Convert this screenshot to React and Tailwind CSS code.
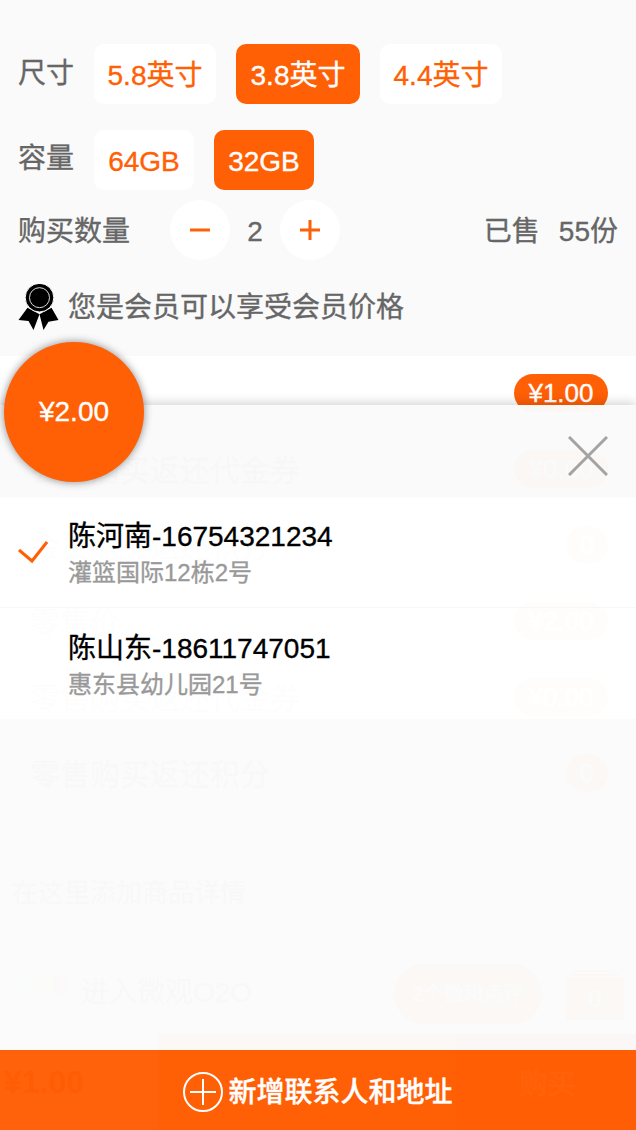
import React from 'react'

const FONT = 'font-["Liberation_Sans","Noto_Sans_CJK_SC",sans-serif] [-webkit-text-stroke:0.35px]'

const rows = [
  { label: '会员价', value: '¥1.00' },
  { label: '会员购买返还代金券', value: '¥0.00' },
  { label: '会员购买返还积分', value: '0', round: true },
  { label: '零售价', value: '¥2.00' },
  { label: '零售购买返还代金券', value: '¥0.00' },
  { label: '零售购买返还积分', value: '0', round: true },
]

const contacts = [
  { name: '陈河南-16754321234', address: '灌篮国际12栋2号', checked: true },
  { name: '陈山东-18611747051', address: '惠东县幼儿园21号' },
]

function Chip({ children, active, width }) {
  return (
    <div
      className={`flex h-[60px] items-center justify-center rounded-[10px] pt-[3px] text-[28px] ${width} ${
        active ? 'bg-[#ff5f05] text-white' : 'bg-white text-[#ff5f05]'
      }`}
    >
      {children}
    </div>
  )
}

function RoundButton({ children }) {
  return (
    <div className="flex h-[60px] w-[60px] items-center justify-center rounded-full bg-white">
      <svg width="22" height="22" viewBox="0 0 22 22" stroke="#ff5f05" strokeWidth="3">
        {children}
      </svg>
    </div>
  )
}

function Medal() {
  return (
    <svg className="h-[47px] w-[41px] shrink-0" viewBox="54 27 122 141">
      <path d="M82 98 L55 135 L85 138 L100 165 L118 118 Z" fill="#000" />
      <path d="M154 98 L175 135 L145 140 L130 165 L118 118 Z" fill="#000" />
      <circle cx="118" cy="68" r="43" fill="#000" stroke="#fff" strokeWidth="3" />
      <circle cx="118" cy="68" r="30" fill="#000" stroke="#ddd" strokeWidth="3" />
    </svg>
  )
}

// the page that sits behind the address sheet
function ProductPage() {
  return (
    <div className="flex h-[1130px] flex-col bg-[#fafafa]">
      <div className="flex flex-col pl-[18px] pr-[18px] pt-[44px] text-[#666]">
        <div className="flex items-center">
          <span className="w-[76px] pb-[1px] text-[28px]">尺寸</span>
          <div className="flex gap-5">
            <Chip width="w-[122px]">5.8英寸</Chip>
            <Chip width="w-[124px]" active>3.8英寸</Chip>
            <Chip width="w-[122px]">4.4英寸</Chip>
          </div>
        </div>
        <div className="mt-[26px] flex items-center">
          <span className="w-[76px] pb-[2px] text-[28px]">容量</span>
          <div className="flex gap-5">
            <Chip width="w-[100px]">64GB</Chip>
            <Chip width="w-[100px]" active>32GB</Chip>
          </div>
        </div>
        <div className="mt-[10px] flex items-center">
          <span className="w-[152px] pt-[3px] text-[28px]">购买数量</span>
          <RoundButton>
            <path d="M1 11 H21" />
          </RoundButton>
          <span className="w-[50px] pt-[3px] text-center text-[28px]">2</span>
          <RoundButton>
            <path d="M1 11 H21 M11 1 V21" />
          </RoundButton>
          <span className="ml-auto pt-[3px] text-[28px]">
            已售<span className="ml-[19px]">55份</span>
          </span>
        </div>
        <div className="mt-[24px] flex items-center gap-[9px]">
          <Medal />
          <span className="text-[28px]">您是会员可以享受会员价格</span>
        </div>
      </div>

      <div className="mt-[25px] flex flex-col bg-white">
        {rows.map((row) => (
          <div key={row.label} className="flex h-[76px] items-center justify-between pb-[2px] pl-[30px] pr-[28px]">
            <span className="pt-[2px] text-[30px] text-[#666]">{row.label}</span>
            <span
              className={`flex h-[38px] items-center justify-center rounded-full bg-[#ff5f05] text-[26px] text-white ${
                row.round ? 'w-[42px]' : 'w-[94px]'
              }`}
            >
              {row.value}
            </span>
          </div>
        ))}
      </div>

      <p className="mt-[62px] pl-[12px] text-[26px] text-[#666]">在这里添加商品详情</p>

      <div className="mt-[51px] flex h-[60px] items-center pl-[15px] pr-[12px]">
        <div className="mb-[18px] flex w-[66px]">
          <span className="h-5 w-[13px] rounded-sm bg-blue-200" />
          <span className="h-5 w-[13px] rounded-sm bg-yellow-200" />
          <span className="h-5 w-[13px] rounded-sm bg-orange-200" />
          <span className="h-5 w-[13px] rounded-sm bg-red-300" />
        </div>
        <span className="pb-[3px] text-[28px] text-[#666]">进入微观O2O</span>
        <span className="ml-auto flex h-[60px] w-[148px] items-center justify-center rounded-full bg-[#ff5f05] text-[20px] text-white">
          2个微和点评
        </span>
        <div className="ml-[24px] flex w-[58px] flex-col items-center gap-[2px] pt-[2px]">
          <span className="h-[2px] w-[40px] bg-[#ff5f05]" />
          <span className="h-[2px] w-[48px] bg-[#ff5f05]" />
          <span className="flex h-[42px] w-[58px] items-center justify-center bg-[#ff5f05] text-[24px] text-white">
            0
          </span>
        </div>
      </div>

      <div className="mt-[10px] flex h-[96px] flex-1 bg-white">
        <div className="flex w-[158px] items-center pl-[4px] text-[32px] font-bold text-[#c00000]">¥1.00</div>
        <div className="w-[298px] bg-[#ff5f05]" />
        <div className="flex flex-1 items-center justify-center bg-[#f55500] pl-[3px] pt-[6px] text-[28px] text-white">购买</div>
      </div>
    </div>
  )
}

function AddressSheet() {
  return (
    <div className="absolute inset-x-0 bottom-0 top-[405px] flex flex-col shadow-[0_-2px_10px_rgba(0,0,0,0.18)]">
      <div className="flex h-[92px] items-start justify-end bg-[#fafafa]/98 pr-[28px] pt-[31px]">
        <svg width="40" height="40" viewBox="0 0 40 40" stroke="#a3a3a3" strokeWidth="3">
          <path d="M1 1 L39 39 M39 1 L1 39" />
        </svg>
      </div>
      <div className="flex flex-col">
        {contacts.map((contact, i) => (
          <div
            key={contact.name}
            className={`flex h-[111px] items-center bg-white/99 ${i === 0 ? 'border-b border-[#f7f7f7]' : ''}`}
          >
            <div className="flex w-[69px] justify-start pl-[18px]">
              {contact.checked && (
                <svg width="30" height="24" viewBox="0 0 30 24" fill="none" stroke="#ff5f05" strokeWidth="3">
                  <path d="M1 10 L14 21 L29 2" />
                </svg>
              )}
            </div>
            <div className="flex flex-col pt-[6px]">
              <span className="-ml-[1px] text-[28px] leading-[34px] text-black">{contact.name}</span>
              <span className="-ml-[1px] mt-[2px] text-[24px] leading-[34px] text-[#999]">{contact.address}</span>
            </div>
          </div>
        ))}
      </div>
      <div className="flex-1 bg-[#fbfbfb]/98" />
      <div className="flex h-[80px] items-center justify-center gap-[5px] bg-[#ff5f05]/98 pt-[4px] text-white">
        <svg width="40" height="40" viewBox="0 0 40 40" fill="none" stroke="#fff" strokeWidth="2">
          <circle cx="20" cy="20" r="19" />
          <path d="M7 20 H33 M20 7 V33" />
        </svg>
        <span className="pt-[2px] text-[28px] font-medium">新增联系人和地址</span>
      </div>
    </div>
  )
}

export default function App() {
  return (
    <div className={`relative h-[1130px] w-full overflow-hidden ${FONT}`}>
      <ProductPage />
      <AddressSheet />
      <div className="absolute left-1 top-[342px] flex h-[140px] w-[140px] items-center justify-center rounded-full bg-[#ff5f05] text-[28px] text-white shadow-[0_0_8px_rgba(0,0,0,0.45)]">
        ¥2.00
      </div>
    </div>
  )
}
